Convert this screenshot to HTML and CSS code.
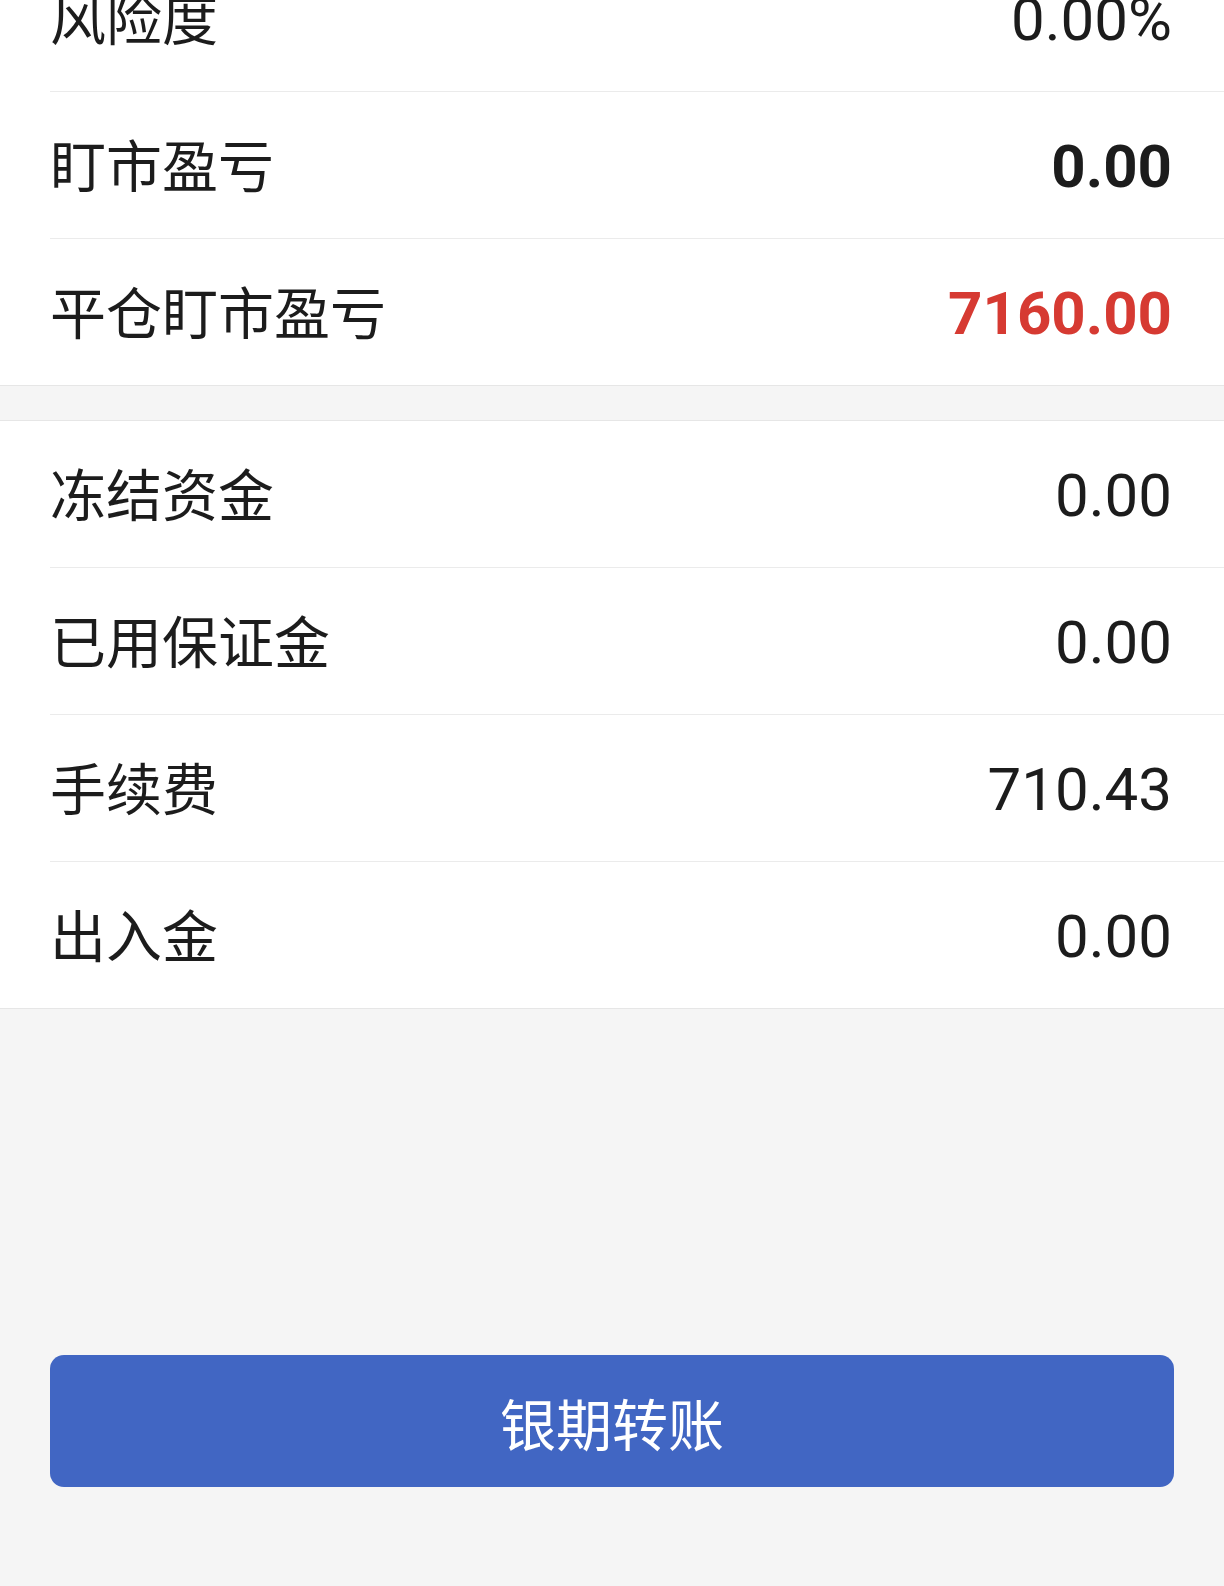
FILE: index.html
```html
<!DOCTYPE html>
<html lang="zh-CN">
<head>
    <meta charset="UTF-8">
    <meta name="viewport" content="width=device-width, initial-scale=1.0">
    <title>资金详情</title>
    <link rel="stylesheet" href="styles.css">
</head>
<body>
    <div class="page">
        <div class="panel panel-top">
            <div class="row">
                <span class="label">风险度</span>
                <span class="value">0.00%</span>
            </div>
            <div class="row">
                <span class="label">盯市盈亏</span>
                <span class="value value-bold">0.00</span>
            </div>
            <div class="row">
                <span class="label">平仓盯市盈亏</span>
                <span class="value value-bold value-up">7160.00</span>
            </div>
        </div>

        <div class="panel">
            <div class="row">
                <span class="label">冻结资金</span>
                <span class="value">0.00</span>
            </div>
            <div class="row">
                <span class="label">已用保证金</span>
                <span class="value">0.00</span>
            </div>
            <div class="row">
                <span class="label">手续费</span>
                <span class="value">710.43</span>
            </div>
            <div class="row">
                <span class="label">出入金</span>
                <span class="value">0.00</span>
            </div>
        </div>

        <div class="actions">
            <a href="#" class="transfer-button">银期转账</a>
        </div>
    </div>
</body>
</html>
```

FILE: styles.css
```css
:root {
    --bg-page: #f5f5f5;
    --bg-panel: #ffffff;
    --line: #ebebeb;
    --line-panel: #e6e6e6;
    --text-primary: #1c1c1c;
    --text-up: #d63a32;
    --accent: #4166c3;
}

* {
    margin: 0;
    padding: 0;
    box-sizing: border-box;
}

html,
body {
    height: 100%;
    overflow: hidden;
}

body {
    background-color: var(--bg-page);
    color: var(--text-primary);
    font-family: Roboto, "Noto Sans CJK SC", sans-serif;
}

/* la page est defilee : la premiere ligne est coupee en haut */
.page {
    margin-top: -55px;
}

.panel {
    background-color: var(--bg-panel);
    border-top: 1px solid var(--line-panel);
    border-bottom: 1px solid var(--line-panel);
    padding-left: 50px;
}

.panel-top {
    border-top: none;
    margin-bottom: 34px;
}

.row {
    display: flex;
    align-items: center;
    justify-content: space-between;
    height: 147px;
    padding: 0 52px 0 0;
    border-bottom: 1px solid var(--line);
}

.row:last-child {
    height: 146px;
    border-bottom: none;
}

.label {
    font-family: "Noto Sans CJK SC", sans-serif;
    font-size: 56px;
    line-height: 1;
    padding-bottom: 4px;
}

.value {
    font-family: Roboto, sans-serif;
    font-size: 60px;
    line-height: 1;
    padding-top: 4px;
}

.value-bold {
    font-weight: 700;
}

.value-up {
    color: var(--text-up);
}

.actions {
    padding: 346px 50px 0;
}

.transfer-button {
    display: flex;
    align-items: center;
    justify-content: center;
    height: 132px;
    background-color: var(--accent);
    border-radius: 14px;
    color: #ffffff;
    font-family: "Noto Sans CJK SC", sans-serif;
    font-size: 56px;
    text-decoration: none;
}
```
